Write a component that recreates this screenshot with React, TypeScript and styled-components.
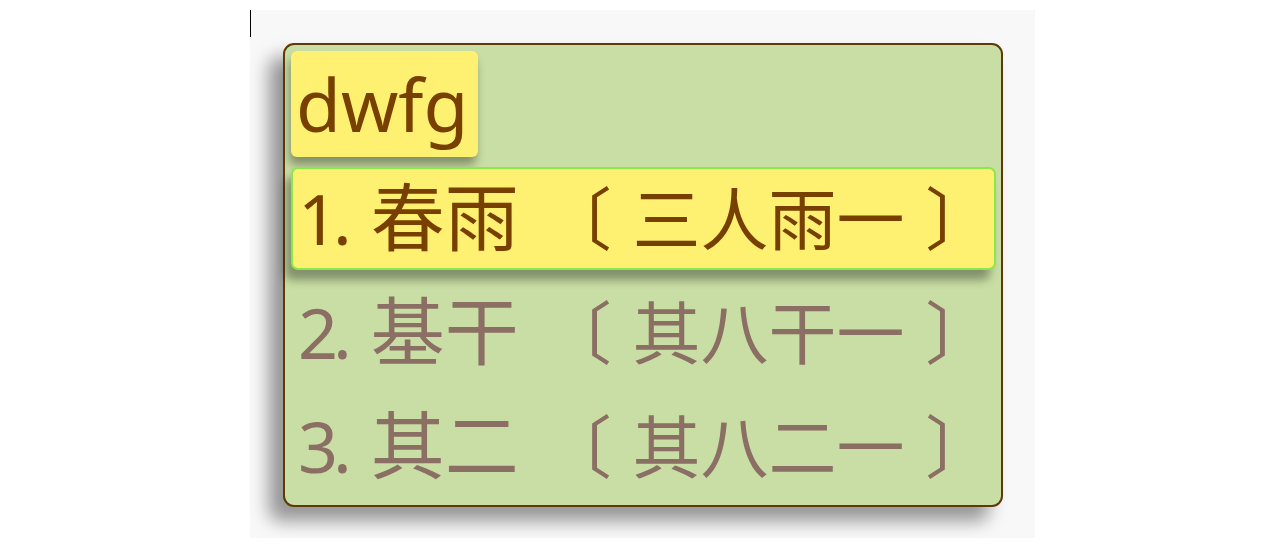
import styled, { createGlobalStyle } from "styled-components";

const Global = createGlobalStyle`
  html, body {
    margin: 0;
    padding: 0;
    background: #ffffff;
  }
  body {
    font-family: "Noto Sans", "Noto Sans CJK SC", sans-serif;
  }
`;

const Page = styled.div`
  display: flex;
  justify-content: center;
  padding-top: 10px;
`;

const Canvas = styled.div`
  position: relative;
  width: 785px;
  height: 528px;
  background: #f8f8f8;
  padding: 33px 0 0 33px;
  box-sizing: border-box;
`;

const Caret = styled.div`
  position: absolute;
  left: 0;
  top: 0;
  width: 1px;
  height: 27px;
  background: #000;
`;

const Panel = styled.div`
  width: 720px;
  height: 464px;
  box-sizing: border-box;
  background: #c9dea4;
  border: 2px solid #5e3a08;
  border-radius: 11px;
  padding: 6px 5px 5px 6px;
  box-shadow: -14px 14px 18px rgba(0, 0, 0, 0.4);
  display: flex;
  flex-direction: column;
  align-items: flex-start;
  gap: 11px;
`;

const Preedit = styled.div`
  height: 106px;
  box-sizing: border-box;
  padding: 0 10px 0 5px;
  background: #fef070;
  border-radius: 6px;
  color: #774000;
  font-size: 73px;
  line-height: 106px;
  box-shadow: -2px 8px 10px rgba(0, 0, 0, 0.35);
  margin-bottom: -1px;
`;

const Row = styled.div<{ $active?: boolean }>`
  align-self: stretch;
  height: 103px;
  box-sizing: border-box;
  padding: 0 8px 0 5px;
  white-space: pre;
  font-size: 70px;
  line-height: 99px;
  color: ${(p) => (p.$active ? "#774000" : "#8b6e64")};
  background: ${(p) => (p.$active ? "#fef070" : "transparent")};
  border: 2px solid ${(p) => (p.$active ? "#8fe64b" : "transparent")};
  border-radius: 7px;
  box-shadow: ${(p) => (p.$active ? "-6px 10px 10px rgba(0, 0, 0, 0.35)" : "none")};
`;

const Label = styled.span`
  letter-spacing: -5px;
`;

const Text = styled.span`
  font-size: 74px;
  line-height: 1;
  margin-left: 24px;
`;

const Comment = styled.span`
  font-size: 68px;
  line-height: 1;
  word-spacing: 3px;
  margin-left: 25px;
`;

const candidates = [
  { label: "1.", text: "春雨", comment: "〔 三人雨一 〕" },
  { label: "2.", text: "基干", comment: "〔 其八干一 〕" },
  { label: "3.", text: "其二", comment: "〔 其八二一 〕" },
];

export default function App() {
  return (
    <>
      <Global />
      <Page>
        <Canvas>
          <Caret />
          <Panel>
            <Preedit>dwfg</Preedit>
            {candidates.map((c, i) => (
              <Row key={c.label} $active={i === 0}>
                <Label>{c.label}</Label>
                <Text>{c.text}</Text>
                <Comment>{c.comment}</Comment>
              </Row>
            ))}
          </Panel>
        </Canvas>
      </Page>
    </>
  );
}
